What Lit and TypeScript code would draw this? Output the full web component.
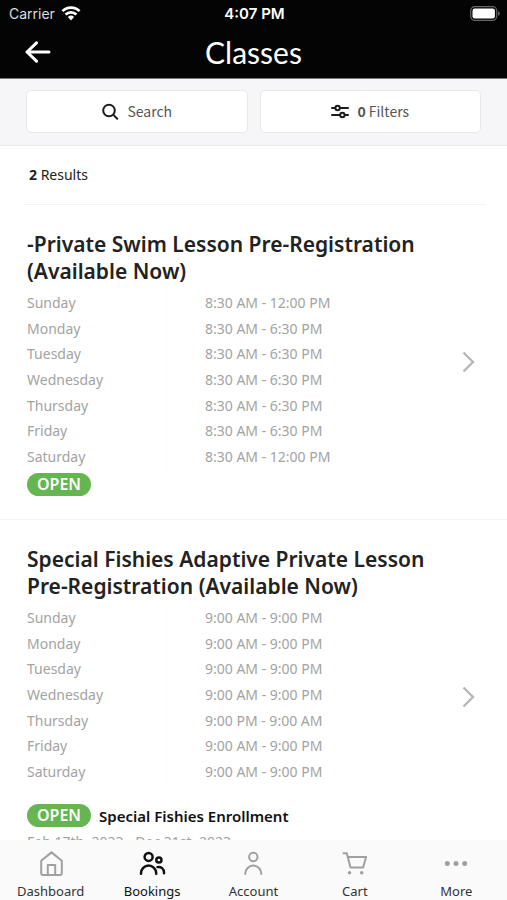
import { LitElement, html, css, svg, nothing } from "lit";
import { customElement, property } from "lit/decorators.js";
import { classMap } from "lit/directives/class-map.js";

interface Session {
  title: string;
  hours: [string, string][];
  spaced: boolean;
  enrollment?: string;
  dates?: string;
}

interface Tab {
  label: string;
  icon: unknown;
  active?: boolean;
}

const SESSIONS: Session[] = [
  {
    title: "-Private Swim Lesson Pre-Registration (Available Now)",
    spaced: false,
    hours: [
      ["Sunday", "8:30 AM - 12:00 PM"],
      ["Monday", "8:30 AM - 6:30 PM"],
      ["Tuesday", "8:30 AM - 6:30 PM"],
      ["Wednesday", "8:30 AM - 6:30 PM"],
      ["Thursday", "8:30 AM - 6:30 PM"],
      ["Friday", "8:30 AM - 6:30 PM"],
      ["Saturday", "8:30 AM - 12:00 PM"],
    ],
  },
  {
    title: "Special Fishies Adaptive Private Lesson Pre-Registration (Available Now)",
    spaced: true,
    hours: [
      ["Sunday", "9:00 AM - 9:00 PM"],
      ["Monday", "9:00 AM - 9:00 PM"],
      ["Tuesday", "9:00 AM - 9:00 PM"],
      ["Wednesday", "9:00 AM - 9:00 PM"],
      ["Thursday", "9:00 PM - 9:00 AM"],
      ["Friday", "9:00 AM - 9:00 PM"],
      ["Saturday", "9:00 AM - 9:00 PM"],
    ],
    enrollment: "Special Fishies Enrollment",
    dates: "Feb 17th, 2023 - Dec 31st, 2023",
  },
];

const TABS: Tab[] = [
  {
    label: "Dashboard",
    icon: svg`<path d="M4.200 10.700 14.500 2.400 24.800 10.700V23a1.900 1.900 0 0 1-1.900 1.900H6.100A1.900 1.900 0 0 1 4.200 23Z"/><path d="M10.800 24.900V14.900h7.400v10"/>`,
  },
  {
    label: "Bookings",
    active: true,
    icon: svg`<circle cx="10.600" cy="6.900" r="4"/><circle cx="20.900" cy="10" r="2.600"/><path d="M3 23.800v-.6a7.600 7.600 0 0 1 15.200 0v.6"/><path d="M19.400 17.100c3.600-.8 6.600 1.700 6.600 5.500v.6"/>`,
  },
  {
    label: "Account",
    icon: svg`<circle cx="14.300" cy="7" r="4.200"/><path d="M6.300 24v-.4a8 8 0 0 1 16 0v.4"/>`,
  },
  {
    label: "Cart",
    icon: svg`<path d="M2.500 3.300h3.300L9.500 17.500h12.600L25.100 7H6.800"/><circle class="dot" cx="8.500" cy="22.800" r="1.800"/><circle class="dot" cx="20.700" cy="22.800" r="1.800"/>`,
  },
  {
    label: "More",
    icon: svg`<circle class="dot" cx="5.300" cy="13.600" r="2.500"/><circle class="dot" cx="14" cy="13.600" r="2.500"/><circle class="dot" cx="22.700" cy="13.600" r="2.500"/>`,
  },
];

@customElement("class-card")
export class ClassCard extends LitElement {
  @property({ attribute: false }) session!: Session;

  static styles = css`
    :host {
      display: block;
    }
    .card {
      display: flex;
      align-items: center;
      justify-content: space-between;
      gap: 24px;
      padding: 26px 32px 23px 27px;
      border-bottom: 1px solid #f4f4f4;
    }
    .title {
      margin: 0 0 5px;
      color: #222;
      font-size: 21px;
      font-weight: 600;
      line-height: 27px;
    }
    .hours {
      height: 180px;
      border-collapse: collapse;
      color: #a3a3a3;
      font-size: 14px;
      line-height: 20px;
    }
    .day,
    .time {
      padding: 0;
      font-weight: 400;
      text-align: left;
    }
    .day {
      width: 139px;
      border-right: 1px solid #fbfbfb;
    }
    .time {
      padding-left: 38px;
    }
    .status {
      display: flex;
      align-items: center;
      gap: 8px;
      margin-top: 3px;
    }
    .status.spaced {
      margin-top: 19px;
    }
    .badge {
      padding: 0 10px;
      border-radius: 12px;
      background: #65b550;
      color: #fff;
      font-size: 16px;
      font-weight: 600;
      line-height: 23px;
    }
    .enrollment {
      color: #111;
      font-size: 15px;
      font-weight: 600;
    }
    .dates {
      margin: 5px 0 0;
      color: #a3a3a3;
      font-size: 14px;
      line-height: 20px;
    }
    .chevron {
      flex: none;
      width: 13px;
      height: 22px;
      margin-bottom: 4px;
      fill: none;
      stroke: #b8b8b8;
      stroke-width: 2.4;
    }
  `;

  render() {
    const s = this.session;
    return html`
      <article class="card">
        <div>
          <h2 class="title">${s.title}</h2>
          <table class="hours">
            <tbody>
              ${s.hours.map(
                ([day, time]) => html`<tr>
                  <th class="day" scope="row">${day}</th>
                  <td class="time">${time}</td>
                </tr>`
              )}
            </tbody>
          </table>
          <div class=${classMap({ status: true, spaced: s.spaced })}>
            <span class="badge">OPEN</span>
            ${s.enrollment ? html`<span class="enrollment">${s.enrollment}</span>` : nothing}
          </div>
          ${s.dates ? html`<p class="dates">${s.dates}</p>` : nothing}
        </div>
        <svg class="chevron" viewBox="0 0 13 22" aria-hidden="true">
          <path d="M1.500 1.500 11 11 1.500 20.500" />
        </svg>
      </article>
    `;
  }
}

@customElement("app-root")
export class AppRoot extends LitElement {
  static styles = css`
    :host {
      display: flex;
      flex-direction: column;
      height: 100vh;
      background: #fff;
      color: #222;
      font-family: "Noto Sans", sans-serif;
    }
    .header {
      flex: none;
      background: #040404;
      color: #fff;
      border-bottom: 1px solid #777;
    }
    .status {
      display: grid;
      grid-template-columns: 1fr auto 1fr;
      align-items: center;
      height: 27px;
      padding: 0 7px 0 9px;
      font-family: Inter, "Liberation Sans", sans-serif;
      font-size: 14px;
    }
    .carrier {
      display: flex;
      align-items: center;
      gap: 6px;
      color: #ddd;
    }
    .wifi {
      width: 20px;
      height: 15px;
    }
    .clock {
      font-size: 15px;
      font-weight: 600;
    }
    .battery {
      justify-self: end;
      width: 30px;
      height: 15px;
    }
    .bar {
      display: grid;
      grid-template-columns: 76px 1fr 76px;
      align-items: center;
      height: 49px;
      padding-bottom: 2px;
    }
    .back {
      display: flex;
      justify-content: center;
      padding: 0;
      border: 0;
      background: none;
    }
    .back svg {
      width: 26px;
      height: 22px;
      fill: none;
      stroke: #fff;
      stroke-width: 3;
      stroke-linecap: round;
      stroke-linejoin: round;
    }
    .page-title {
      margin: 0;
      font-family: Lato, "Noto Sans", sans-serif;
      font-size: 30px;
      font-weight: 400;
      line-height: 36px;
      text-align: center;
    }
    .tools {
      flex: none;
      display: grid;
      grid-template-columns: 1fr 1fr;
      gap: 12px;
      padding: 11px 26px 12px;
      border-bottom: 1px solid #ebebeb;
      background: #f6f6f8;
    }
    .tool {
      display: flex;
      align-items: center;
      justify-content: center;
      gap: 8px;
      height: 43px;
      padding: 0 0 2px;
      border: 1px solid #e8e8ea;
      border-radius: 5px;
      background: #fff;
      color: #555;
      font-family: "Noto Sans CJK SC", "Noto Sans", sans-serif;
      font-size: 14px;
    }
    .tool svg {
      width: 18px;
      height: 18px;
      fill: none;
      stroke: #1c1c1c;
      stroke-width: 2;
      stroke-linecap: round;
    }
    .results {
      flex: 1;
      min-height: 0;
      overflow-y: auto;
      scrollbar-width: none;
    }
    .count {
      margin: 0 21px 0 24px;
      padding: 18px 5px;
      border-bottom: 1px solid #f2f2f2;
      font-size: 14px;
      line-height: 22px;
    }
    .tabs {
      flex: none;
      display: grid;
      grid-template-columns: repeat(5, 1fr);
      height: 60px;
      background: #fafafa;
    }
    .tab {
      display: flex;
      flex-direction: column;
      align-items: center;
      gap: 4px;
      padding-top: 10px;
      color: #333;
      font-size: 13px;
      line-height: 18px;
      text-decoration: none;
    }
    .tab svg {
      width: 28px;
      height: 28px;
      fill: none;
      stroke: #a0a0a0;
      stroke-width: 2;
      stroke-linecap: round;
      stroke-linejoin: round;
    }
    .tab .dot {
      fill: #a0a0a0;
      stroke: none;
    }
    .tab.active {
      color: #111;
    }
    .tab.active svg {
      stroke: #111;
      stroke-width: 2.5;
    }
  `;

  render() {
    return html`
      <header class="header">
        <div class="status">
          <span class="carrier">
            Carrier
            <svg class="wifi" viewBox="0 0 18 14" aria-hidden="true" fill="none" stroke="#fff" stroke-width="2.5">
              <path d="M1 4.800a11.400 11.400 0 0 1 16 0" />
              <path d="M3.900 8a7.300 7.300 0 0 1 10.200 0" />
              <path d="M9 13.500 6.100 10.300a4.200 4.200 0 0 1 5.800 0Z" fill="#fff" stroke="none" />
            </svg>
          </span>
          <span class="clock">4:07 PM</span>
          <svg class="battery" viewBox="0 0 30 15" aria-hidden="true">
            <rect x="0.700" y="0.700" width="26" height="13.600" rx="4" fill="none" stroke="#666" stroke-width="1.200" />
            <rect x="2.500" y="2.500" width="22.400" height="10" rx="2.200" fill="#fff" />
            <path d="M28 5.200q1.800.6 1.800 2.300T28 9.800Z" fill="#666" />
          </svg>
        </div>
        <div class="bar">
          <button class="back" type="button" aria-label="Back">
            <svg viewBox="0 0 26 22"><path d="M24 11H2M11.500 1.800 2 11l9.500 9.200" /></svg>
          </button>
          <h1 class="page-title">Classes</h1>
        </div>
      </header>
      <div class="tools">
        <button class="tool" type="button">
          <svg viewBox="0 0 18 18" aria-hidden="true">
            <circle cx="8" cy="8.500" r="5.800" />
            <path d="m12.400 12.900 3.800 3.800" />
          </svg>
          <span>Search</span>
        </button>
        <button class="tool" type="button">
          <svg viewBox="0 0 18 18" aria-hidden="true">
            <path d="M1 6h3.200M9 6h8M1 13h8M13.800 13H17" />
            <circle cx="6.600" cy="6" r="2.200" />
            <circle cx="11.400" cy="13" r="2.200" />
          </svg>
          <span><b>0</b> Filters</span>
        </button>
      </div>
      <main class="results">
        <p class="count"><b>2</b> Results</p>
        ${SESSIONS.map((s) => html`<class-card .session=${s}></class-card>`)}
      </main>
      <nav class="tabs">
        ${TABS.map(
          (t) => html`<a class=${classMap({ tab: true, active: !!t.active })} href="#">
            <svg viewBox="0 0 28 28" aria-hidden="true">${t.icon}</svg>
            ${t.label}
          </a>`
        )}
      </nav>
    `;
  }
}
